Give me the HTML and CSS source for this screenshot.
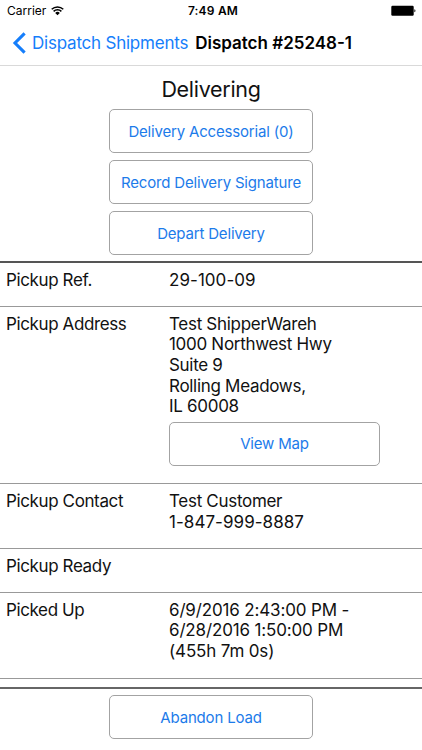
FILE: index.html
```html
<!DOCTYPE html>
<html lang="en">
<head>
  <meta charset="UTF-8" />
  <meta name="viewport" content="width=device-width, initial-scale=1.0"/>
  <title>Dispatch #25248-1</title>
  <link rel="stylesheet" href="styles.css">
</head>
<body>
  <div class="status-bar">
    <div class="carrier">
      <span>Carrier</span>
      <svg class="wifi" viewBox="0 0 13 10" width="13" height="10">
        <path d="M0.7 3.3a8.4 8.4 0 0 1 11.6 0M2.6 5.4a5.6 5.6 0 0 1 7.8 0" fill="none" stroke="#000" stroke-width="1.5"/>
        <path d="M6.5 9.3L4.2 7a3.2 3.2 0 0 1 4.6 0z"/>
      </svg>
    </div>
    <div class="time">7:49 AM</div>
    <svg class="battery" viewBox="0 0 26 12" width="26" height="12">
      <rect x="1.3" y="0.8" width="22.4" height="10" rx="1.2"/>
      <path d="M24.4 4.3c1.4 0.4 1.4 2.6 0 3z"/>
    </svg>
  </div>

  <div class="nav-bar">
    <a class="back" href="#">
      <svg viewBox="0 0 14 22" width="14" height="22">
        <path d="M12.6 1.3L3 11l9.6 9.7" fill="none" stroke="#157efb" stroke-width="3.1"/>
      </svg>
      <span>Dispatch Shipments</span>
    </a>
    <h1>Dispatch #25248-1</h1>
  </div>

  <div class="actions">
    <h2>Delivering</h2>
    <button>Delivery Accessorial (0)</button>
    <button>Record Delivery Signature</button>
    <button>Depart Delivery</button>
  </div>

  <div class="details">
    <div class="row">
      <div class="label">Pickup Ref.</div>
      <div class="value"><span class="num">29-100-09</span></div>
    </div>
    <div class="row">
      <div class="label">Pickup Address</div>
      <div class="value">
        Test ShipperWareh<br>
        1000 Northwest Hwy<br>
        Suite 9<br>
        Rolling Meadows,<br>
        IL 60008
        <button class="map">View Map</button>
      </div>
    </div>
    <div class="row">
      <div class="label">Pickup Contact</div>
      <div class="value">Test Customer<br><span class="num">1-847-999-8887</span></div>
    </div>
    <div class="row">
      <div class="label">Pickup Ready</div>
      <div class="value"></div>
    </div>
    <div class="row">
      <div class="label">Picked Up</div>
      <div class="value date">6/9/2016 2:43:00 PM -<br>6/28/2016 1:50:00 PM<br>(455h 7m 0s)</div>
    </div>
  </div>

  <div class="footer">
    <button>Abandon Load</button>
  </div>
</body>
</html>
```
FILE: styles.css
```css
* { box-sizing: border-box; }
body {
  margin: 0;
  height: 100vh;
  display: flex;
  flex-direction: column;
  overflow: hidden;
  background: #fff;
  color: #111;
  font-family: Inter, "Liberation Sans", sans-serif;
  font-size: 17px;
}

.status-bar {
  display: grid;
  grid-template-columns: 1fr auto 1fr;
  align-items: center;
  height: 22px;
  padding: 0 6px 1px 7px;
  font-size: 12px;
  color: #000;
}

.carrier {
  display: flex;
  align-items: center;
  gap: 5px;
}

.time {
  padding-left: 3px;
  font-weight: 600;
  letter-spacing: 0.2px;
}

.battery {
  justify-self: end;
}

.nav-bar {
  display: flex;
  align-items: center;
  gap: 7px;
  height: 44px;
  padding: 0 12px 1px;
  border-bottom: 1px solid #d9d9d9;
  white-space: nowrap;
}

.nav-bar h1 {
  margin: 0;
  font-size: 17px;
  font-weight: 600;
  color: #000;
}

.back {
  display: flex;
  align-items: center;
  gap: 6px;
  color: #157efb;
  letter-spacing: -0.22px;
  text-decoration: none;
}

.actions {
  display: flex;
  flex-direction: column;
  align-items: center;
  gap: 7px;
  height: 197px;
  padding-top: 9px;
  border-bottom: 2px solid #555;
}

.actions h2 {
  margin: 0 0 -1px;
  font-size: 21.5px;
  font-weight: 400;
  letter-spacing: -0.3px;
  line-height: 28px;
}

button {
  width: 204px;
  height: 44px;
  flex-shrink: 0;
  padding: 0;
  border: 1px solid #a3a3a3;
  border-radius: 5px;
  background: #fff;
  color: #1c7bea;
  font-family: inherit;
  font-size: 15px;
  letter-spacing: -0.18px;
}

.details {
  flex: 1;
  line-height: 20.7px;
}

.row {
  display: flex;
  padding: 6.5px 6px 15.9px;
  border-bottom: 1px solid #999;
}

.label {
  width: 163px;
  flex-shrink: 0;
  letter-spacing: -0.38px;
}

.value {
  letter-spacing: -0.3px;
}

.num {
  letter-spacing: 0.05px;
}

.date {
  letter-spacing: -0.15px;
}

.map {
  display: block;
  width: 211px;
  margin: 4.5px 0 1.8px;
}

.footer {
  display: flex;
  justify-content: center;
  height: 63px;
  padding-top: 6px;
  border-top: 2px solid #666;
}
```
